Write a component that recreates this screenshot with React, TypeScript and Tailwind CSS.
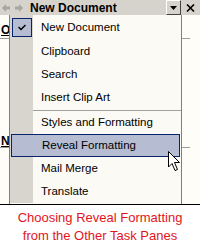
import React from 'react';

const items = [
  { label: 'New Document', checked: true },
  { label: 'Clipboard' },
  { label: 'Search' },
  { label: 'Insert Clip Art' },
  { sep: true },
  { label: 'Styles and Formatting' },
  { label: 'Reveal Formatting', active: true },
  { label: 'Mail Merge' },
  { label: 'Translate' },
];

const NavArrow = ({ flip }: { flip?: boolean }) => (
  <svg width="8" height="8" viewBox="0 0 8 8" className={flip ? 'rotate-180' : ''}>
    <path d="M0 4 L4 0 L4 2.5 L8 2.5 L8 5.5 L4 5.5 L4 8 Z" fill="#a8a6a0" />
  </svg>
);

const Cursor = () => (
  <svg width="13" height="22" viewBox="0 0 13 22" className="absolute left-[168px] top-[151px]">
    <path d="M0.5 0.5 L0.5 16 L4 12.5 L7 19.5 L9.5 18.5 L6.5 11.5 L11.5 11.5 Z" fill="white" stroke="black" strokeWidth="1" strokeLinejoin="miter" />
  </svg>
);

const App = () => {
  return (
    <div className="w-[200px] h-[250px] bg-white flex flex-col" style={{ fontFamily: '"Liberation Sans", Arial, sans-serif' }}>
      <div className="relative h-[205px] overflow-hidden border-b border-black bg-[#fffdf7]">
        {/* title bar */}
        <div className="h-[15px] bg-[#d6d3cc] flex items-center">
          <div className="flex items-center gap-[5px] pl-[2px] w-[30px]">
            <NavArrow />
            <NavArrow flip />
          </div>
          <span className="text-[12px] font-bold text-black leading-none">New Document</span>
          <div className="ml-auto flex items-center h-full">
            <div className="w-[15px] h-[15px] border-t border-l border-[#ffffff] border-r border-b border-r-[#404040] border-b-[#404040] flex items-center justify-center">
              <svg width="7" height="4" viewBox="0 0 7 4"><path d="M0 0 H7 L3.5 4 Z" fill="black" /></svg>
            </div>
            <div className="w-[19px] flex items-center justify-center">
              <svg width="9" height="8" viewBox="0 0 9 8"><path d="M1 0.5 L8 7.5 M8 0.5 L1 7.5" stroke="black" strokeWidth="1.6" /></svg>
            </div>
          </div>
        </div>

        {/* pane content behind the menu */}
        <div className="flex flex-col pt-[9px]">
          <span className="text-[12px] font-bold underline leading-[12px] pl-[1px]">O</span>
          <div className="mt-[2px] h-px bg-[#9a9a9a] w-[190px]" />
          <span className="mt-[96px] text-[12px] font-bold underline leading-[12px] pl-[1px]">N</span>
          <div className="mt-[0px] h-px bg-[#9a9a9a] w-[190px]" />
        </div>

        {/* dropdown menu */}
        <div className="absolute left-[9px] top-[15px] w-[173px] h-[200px] border border-[#7f7f7f] border-t-0 bg-[#fcfaf4] flex flex-col text-[11.5px] text-black">
          {items.map((it, i) =>
            it.sep ? (
              <div key={i} className="flex h-[2px]">
                <div className="w-[23px] bg-[#d8d5ce]" />
                <div className="flex-1 flex items-center"><div className="h-px w-full bg-[#a0a0a0]" /></div>
              </div>
            ) : (
              <div key={i} className={`relative flex ${it.checked ? 'h-[25px]' : 'h-[23px]'}`}>
                <div className="w-[23px] bg-[#d8d5ce] flex items-center justify-center">
                  {it.checked && (
                    <div className="w-[20px] h-[19px] border border-[#0a246a] bg-[#b6bdd2] flex items-center justify-center">
                      <svg width="8" height="7" viewBox="0 0 8 7"><path d="M0.5 3 L3 5.5 L7.5 1" stroke="black" strokeWidth="1.5" fill="none" /></svg>
                    </div>
                  )}
                </div>
                <div className="flex-1 flex items-center pl-[8px]">{it.label}</div>
                {it.active && (
                  <div className="absolute inset-y-0 left-[1px] right-[1px] border border-[#0a246a] bg-[#b6bdd2] flex items-center pl-[30px]">
                    {it.label}
                  </div>
                )}
              </div>
            )
          )}
        </div>

        <Cursor />
      </div>

      <div className="flex-1 flex flex-col items-center pt-[4px] text-[13px] leading-[18px] text-[#e3141c]">
        <span>Choosing Reveal Formatting</span>
        <span>from the Other Task Panes</span>
      </div>
    </div>
  );
};

export default App;
